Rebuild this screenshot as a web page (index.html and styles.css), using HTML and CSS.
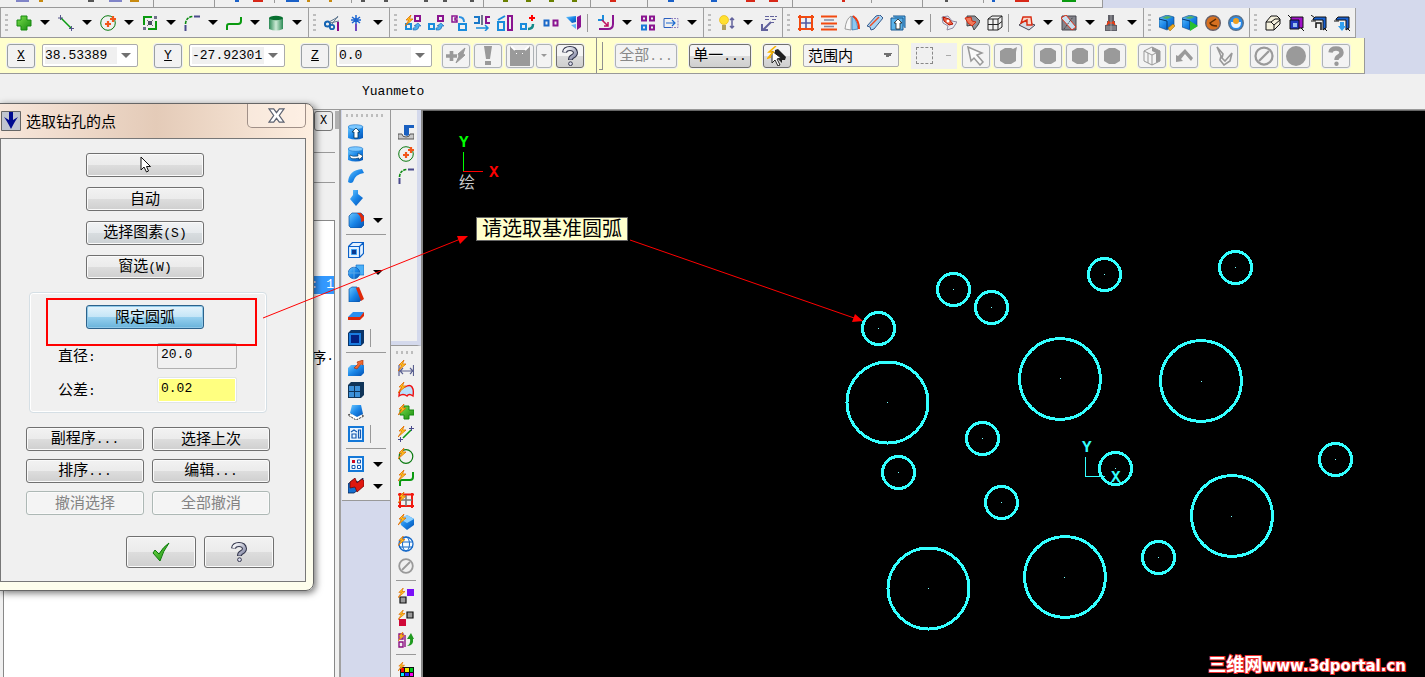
FILE: index.html
```html
<!DOCTYPE html>
<html lang="zh-CN">
<head>
<meta charset="utf-8">
<title>选取钻孔的点</title>
<link rel="stylesheet" href="styles.css">
</head>
<body>
<svg class="defs" aria-hidden="true">
  <defs>
    <linearGradient id="gBlue" x1="0" y1="0" x2="1" y2="1"><stop offset="0" stop-color="#6cc8ff"/><stop offset=".5" stop-color="#1a86e8"/><stop offset="1" stop-color="#0450b0"/></linearGradient>
    <linearGradient id="gGreen" x1="0" y1="0" x2="1" y2="1"><stop offset="0" stop-color="#7be04c"/><stop offset="1" stop-color="#178a10"/></linearGradient>
    <linearGradient id="gCyl" x1="0" x2="1"><stop offset="0" stop-color="#2c8a55"/><stop offset=".5" stop-color="#cdebd6"/><stop offset="1" stop-color="#2c8a55"/></linearGradient>
    <linearGradient id="gQ" x1="0" y1="0" x2="1" y2="1"><stop offset="0" stop-color="#fff"/><stop offset="1" stop-color="#7c80a0"/></linearGradient>
  </defs>
  <symbol id="bolt" viewBox="0 0 16 16"><path d="M6 0L1 5h3L0 11l8-7H4.500z" fill="#ffcf20" stroke="#e06a00" stroke-width=".8"/></symbol>
  <symbol id="plus" viewBox="0 0 16 16"><path d="M5 1h6v4h4v6h-4v4H5v-4H1V5h4z" fill="url(#gGreen)" stroke="#178a10"/></symbol>
  <symbol id="line" viewBox="0 0 16 16"><path d="M3 3l10 10" stroke="#0a9a10" stroke-width="1.500"/><path d="M0 3h5M2.500 0v5M11 13.500h5M13.500 11v5" stroke="#55558c"/></symbol>
  <symbol id="circ" viewBox="0 0 16 16"><circle cx="8" cy="8" r="7.300" fill="none" stroke="#0a7a10"/><path d="M5 9h6M8 6v6M10 4h6M13 1v6" stroke="#f2561a" stroke-width="2.200"/></symbol>
  <symbol id="rect" viewBox="0 0 16 16"><path d="M2 10V2h8M14 6v8H6" fill="none" stroke="#0a9a10" stroke-width="2"/><path d="M6 6h4v4H6z" fill="#444a70"/><path d="M12 1h3v3h-3zM1 12h3v3H1z" fill="#70708c"/><path d="M5 5l6 6M11 5l-6 6" stroke="#555" stroke-width=".8"/></symbol>
  <symbol id="fillet" viewBox="0 0 16 16"><path d="M1.500 10v6" stroke="#4a4a8c" stroke-width="2"/><path d="M1.500 9Q2 2 9 1.500" fill="none" stroke="#0a8a10" stroke-width="1.600" stroke-dasharray="3 1"/><path d="M10 1.500h6" stroke="#4a4a8c" stroke-width="2"/></symbol>
  <symbol id="spline" viewBox="0 0 16 16"><path d="M1 15v-4q0-2 2-2h9q3 0 3-3V2" fill="none" stroke="#0a9a10" stroke-width="2"/></symbol>
  <symbol id="cyl" viewBox="0 0 16 16"><path d="M1 3v11q7 3 14 0V3z" fill="url(#gCyl)"/><ellipse cx="8" cy="3" rx="7" ry="2.200" fill="#087030"/></symbol>
  <symbol id="trim" viewBox="0 0 16 16"><circle cx="3.500" cy="9" r="2.600" fill="none" stroke="#1464b4" stroke-width="2"/><circle cx="8" cy="12" r="2.200" fill="none" stroke="#1464b4" stroke-width="1.800"/><path d="M6 8l9-2M8 9l6-8M5 7l9-5" stroke="#607890"/><path d="M14 7v9" stroke="#8a0a8a" stroke-width="2"/></symbol>
  <symbol id="star" viewBox="0 0 16 16"><path d="M8 0v9M4 2l8 6M12 2L4 8M3 5h10" stroke="#1a64d0" stroke-width="1.500"/><path d="M8 9v7" stroke="#7048c0" stroke-width="2"/></symbol>
  <symbol id="xf1" viewBox="0 0 16 16"><path d="M1 9h5v5H1z" fill="none" stroke="#1a8cdc" stroke-width="2"/><path d="M10 1h5v5h-5z" fill="none" stroke="#8a1490" stroke-width="2"/><path d="M8 15h3q3-1 3-4h2l-3-3-4 3h2q0 2-3 2z" fill="#4ab0f0" stroke="#1060b0" stroke-width=".6"/></symbol>
  <symbol id="xf3" viewBox="0 0 16 16"><path d="M1 1h5v2H4v2h2v2H1z" fill="none" stroke="#8a1490" stroke-width="1.500"/><path d="M8 9h7v6H8z" fill="none" stroke="#1a8cdc" stroke-width="2"/><path d="M8 2q5 0 5 5" fill="none" stroke="#2a90e0" stroke-width="2"/></symbol>
  <symbol id="mirror" viewBox="0 0 16 16"><path d="M0 2h5v6H0" fill="none" stroke="#1a78c8" stroke-width="2"/><path d="M16 2h-4v6h4" fill="none" stroke="#8a1490" stroke-width="2"/><path d="M8 0v10" stroke="#70708c" stroke-width="2"/><path d="M2 13h12M11 10l3 3-3 3" fill="none" stroke="#1a8cdc" stroke-width="1.500"/></symbol>
  <symbol id="scale" viewBox="0 0 16 16"><path d="M1 7h6v8H1z" fill="none" stroke="#1a8cdc" stroke-width="2"/><path d="M11 1h4v14h-4z" fill="none" stroke="#8a1490" stroke-width="2"/><path d="M1 5l7-4" stroke="#1a8cdc" stroke-width="2"/></symbol>
  <symbol id="offs" viewBox="0 0 16 16"><path d="M1 9h5v5H1z" fill="none" stroke="#1a8cdc" stroke-width="2"/><path d="M12 0v6M9 3h6" stroke="#f00" stroke-width="2"/><path d="M8 14q5 0 5-5" stroke="#148a8a" fill="none" stroke-width="2.500"/></symbol>
  <symbol id="two" viewBox="0 0 16 16"><path d="M1.500 5.500h4v5h-4z" fill="none" stroke="#1a68c8" stroke-width="2"/><path d="M10.500 5.500h4v5h-4z" fill="none" stroke="#8a1490" stroke-width="2"/></symbol>
  <symbol id="proj" viewBox="0 0 16 16"><path d="M0 2l10-1v6l-4 1z" fill="url(#gBlue)"/><path d="M11 2l4-2v12l-4 3z" fill="#8a1490"/><path d="M5 10l5 4V9z" fill="#60b8f8"/></symbol>
  <symbol id="arrL" viewBox="0 0 16 16"><path d="M0 5h5V0" fill="none" stroke="#1a8cdc" stroke-width="2"/><path d="M15 0v9q0 5-5 5H1" fill="none" stroke="#8a1490" stroke-width="2"/><path d="M4 5l6 6M10 7v4H6" fill="none" stroke="#c01060" stroke-width="1.500"/></symbol>
  <symbol id="four" viewBox="0 0 16 16"><path d="M2 1.500h4v4H2zM10 1.500h4v4h-4zM10 10.500h4v4h-4z" fill="none" stroke="#8a1490" stroke-width="2"/><path d="M2 10.500h4v4H2z" fill="none" stroke="#1a78d8" stroke-width="2"/></symbol>
  <symbol id="stretch" viewBox="0 0 16 16"><path d="M8 3.500H1v9h7" fill="none" stroke="#2a60c0"/><path d="M8 3.500h7v9H8" fill="none" stroke="#9080c0" stroke-dasharray="2 1"/><path d="M3 8h9M9 5l3 3-3 3" fill="none" stroke="#1a68d0" stroke-width="1.200"/></symbol>
  <symbol id="bulb" viewBox="0 0 16 16"><circle cx="5" cy="5" r="4.500" fill="#ffe030" stroke="#e8b000" stroke-width=".6"/><path d="M3 10h4v5H3z" fill="#b0a060"/><path d="M13 3v10M11 5l2-2 2 2M11 11l2 2 2-2" fill="none" stroke="#62629c" stroke-width="1.500"/></symbol>
  <symbol id="note" viewBox="0 0 16 16"><path d="M4 1.500h12M4 4.500h5m2 0h5M9 7.500h5" stroke="#62629c" stroke-width="1.200" stroke-dasharray="4 1"/><path d="M10 7l-8 8M1 9v6h6" fill="none" stroke="#62629c" stroke-width="2"/></symbol>
  <symbol id="gridr" viewBox="0 0 16 16"><path d="M2 0v16M14 0v16M0 2h16M0 14h16" stroke="#f24a10" stroke-width="2"/><path d="M8 3v10M3 8h10" stroke="#5058a0" stroke-width="1.600"/></symbol>
  <symbol id="bars" viewBox="0 0 16 16"><path d="M0 1.500h16M0 8.500h16M0 14.500h16" stroke="#f24a10" stroke-width="2"/><path d="M3 5h10M3 11.500h10" stroke="#8088a0" stroke-width="1.500"/></symbol>
  <symbol id="revolve" viewBox="0 0 16 16"><path d="M7 1Q2 4 1 14l6 1z" fill="#f8f8f8" stroke="#888" stroke-width=".8"/><path d="M8 1q4 1 6 13l-6 1z" fill="#8cc8f0" stroke="#1a5a9a" stroke-width=".6"/><path d="M9 1q6 4 6 13" stroke="#f03a10" stroke-width="2" fill="none"/></symbol>
  <symbol id="sweep" viewBox="0 0 16 16"><path d="M0 11L9 1l4-1 3 3-9 11-3 1-1-3z" fill="#a8d4f4" stroke="#36588a"/><path d="M3 11l9-9" stroke="#f04a20" stroke-width="1.500"/></symbol>
  <symbol id="net" viewBox="0 0 16 16"><path d="M1 3h12v12H1zM3 1h12v12" fill="#5cb4ec" stroke="#1a5890"/><path d="M8 4l4 4h-2v6H6V8H4z" fill="#fff" stroke="#222" stroke-width=".8"/></symbol>
  <symbol id="srf1" viewBox="0 0 16 16"><path d="M1 2l6-1 4 5 5 1-4 6-6 2 1-4-5-3z" fill="#e8ecf4" stroke="#9088a0"/><path d="M2 2l6 2 4 5-4 1-5-4z" fill="#f06040" stroke="#b01000"/><circle cx="7" cy="6" r="1.500" fill="#fff"/></symbol>
  <symbol id="srf2" viewBox="0 0 16 16"><path d="M3 1h8l5 5-2 4-4 5-2-5-5 1z" fill="#90949c" stroke="#444"/><path d="M1 3l6-1 1 4 4 1-4 4-4-3z" fill="#f07858" stroke="#d02810"/></symbol>
  <symbol id="cubew" viewBox="0 0 16 16"><path d="M1 4h10v11H1zM1 4l4-3h10v11l-4 3M11 4l4-3M1 9.500h10l4-3M6 4v11" fill="none" stroke="#222"/></symbol>
  <symbol id="srf3" viewBox="0 0 16 16"><path d="M0 10l5-4 11 4-6 5z" fill="#d8dce4" stroke="#445"/><path d="M4 2h8l1 8H8V5L2 8z" fill="#f8d8cc" stroke="#d82a10" stroke-width="1.400"/></symbol>
  <symbol id="srf4" viewBox="0 0 16 16"><path d="M1 1h14v14H1z" fill="#84848c" stroke="#44444c"/><path d="M0 3l5-3 10 12-4 3z" fill="#c8e0f0" stroke="#e03018"/><path d="M3 14l9-12" stroke="#444" stroke-dasharray="2 1"/></symbol>
  <symbol id="tower" viewBox="0 0 16 16"><path d="M5 0h6v6h1v4h2v6H2v-6h2V6h1z" fill="#606068"/><path d="M6 6L4 10M10 6l2 4M5 8h6" stroke="#f03a10" stroke-width="1.400"/><path d="M3 12h10M3 14h10M8 0v16" stroke="#ccc" stroke-width=".6"/></symbol>
  <symbol id="mach1" viewBox="0 0 16 16"><path d="M0 3l8-3 7 2v9l-7 4-8-3z" fill="url(#gBlue)" stroke="#104880" stroke-width=".6"/><path d="M3 3l5-2 5 1-5 2z" fill="#54b060"/><path d="M0 4l8 2v8" stroke="#043870" fill="none"/><path d="M9 13l5-4 2 2-5 5z" fill="#f0a820" stroke="#906000" stroke-width=".5"/></symbol>
  <symbol id="mach2" viewBox="0 0 16 16"><path d="M0 3l8-3 7 2v9l-7 4-8-3z" fill="url(#gBlue)" stroke="#104880" stroke-width=".6"/><path d="M3 3l5-2 5 1-5 2z" fill="#54b060"/><path d="M0 4l8 2v8" stroke="#043870" fill="none"/><path d="M8 6l8 5-8 5z" fill="#28c030"/></symbol>
  <symbol id="orb1" viewBox="0 0 16 16"><circle cx="8" cy="8" r="7.300" fill="#d87020" stroke="#66606a" stroke-width="1.400"/><path d="M11 4L5 8q1 3 7 3" fill="none" stroke="#5a2a00" stroke-width="1.500"/></symbol>
  <symbol id="orb2" viewBox="0 0 16 16"><circle cx="8" cy="8" r="7.300" fill="#2a8ae8" stroke="#56708c" stroke-width="1.400"/><path d="M3 7q0 6 5 6t5-6z" fill="#e8f4ff"/><circle cx="8" cy="6" r="3" fill="#f0a020"/></symbol>
  <symbol id="box1" viewBox="0 0 16 16"><path d="M1 7l5-6h6l3 3v5l-6 6H1z" fill="#f4f0dc" stroke="#111"/><path d="M1 7h5l4-3h5M6 7l3 3v5M9 10l6-5" fill="none" stroke="#111"/></symbol>
  <symbol id="box2" viewBox="0 0 16 16"><path d="M3 2h12v11H3z" fill="#a010c8" stroke="#111"/><path d="M2 5h9v9H2z" fill="#2038c0" stroke="#111"/><path d="M5 8h4v4H5z" fill="#9ac0f0"/><path d="M0 0l3 3M13 13l3 3" stroke="#111"/></symbol>
  <symbol id="box3" viewBox="0 0 16 16"><path d="M2 4l2-2h11v11l-3 2V5H2z" fill="#1860d0" stroke="#111"/><path d="M5 13V8h5v7" fill="none" stroke="#111" stroke-width="1.500"/><path d="M0 6h5M0 0l4 3M13 13l3 3" stroke="#111"/></symbol>
  <symbol id="box4" viewBox="0 0 16 16"><path d="M2 4l2-2h11v11l-3 2V5H2z" fill="#1860d0" stroke="#111"/><path d="M6 7h4v4h2l-4 5-4-5h2z" fill="#30a0f0"/><path d="M0 6h5M13 13l3 3" stroke="#111"/></symbol>
  <symbol id="s1" viewBox="0 0 16 16"><path d="M0 3v11q8 3 15 0V3z" fill="url(#gBlue)"/><ellipse cx="7.500" cy="3" rx="7.500" ry="2.300" fill="#7cc8ff" stroke="#1470c8" stroke-width=".6"/><path d="M8 4l4 4h-2v6H6V8H4z" fill="#fff" stroke="#035" stroke-width=".8"/></symbol>
  <symbol id="s2" viewBox="0 0 16 16"><path d="M0 3v11q8 3 15 0V3z" fill="url(#gBlue)"/><ellipse cx="7.500" cy="3" rx="7.500" ry="2.300" fill="#7cc8ff" stroke="#1470c8" stroke-width=".6"/><path d="M2 9q2 2 8 1V7l5 3-4 4v-2q-8 2-9-1z" fill="#fff" stroke="#035" stroke-width=".6"/></symbol>
  <symbol id="s3" viewBox="0 0 16 16"><path d="M0 14Q1 2 14 1l2 4Q7 6 5 14q-2 2-5 0z" fill="url(#gBlue)"/></symbol>
  <symbol id="s4" viewBox="0 0 16 16"><path d="M5 0h5v4l5 4-7 8-6-7 3-4z" fill="url(#gBlue)"/></symbol>
  <symbol id="s5" viewBox="0 0 16 16"><path d="M1 4l3-3h9l3 3v9l-3 3H3l-2-2z" fill="url(#gBlue)" stroke="#0a50a0" stroke-width=".7"/><path d="M9 1h4l3 4v4l-3 1q1-5-4-9z" fill="#e02808"/></symbol>
  <symbol id="s6" viewBox="0 0 16 16"><path d="M.500 4.500h11v11H.500zM.500 4.500l4-4h11v11l-4 4M11.500 4.500l4-4" fill="#e4f2ff" stroke="#0a60c8" stroke-width="1.200"/><path d="M3.500 7.500h5v5h-5z" fill="#0a3a90" stroke="#3aa0f0"/></symbol>
  <symbol id="s7" viewBox="0 0 16 16"><path d="M8 1h8v10H8z" fill="#4ab0f8" stroke="#1470c8" stroke-width=".7"/><circle cx="6" cy="9" r="5.800" fill="url(#gBlue)" stroke="#0a58b0" stroke-width=".7"/><path d="M6 3v12M0 9h12" stroke="#5aa8e8"/></symbol>
  <symbol id="s8" viewBox="0 0 16 16"><path d="M1 3l3-2h5l5 12-3 3H1z" fill="url(#gBlue)" stroke="#0a50a0" stroke-width=".7"/><path d="M8 2l3-1 5 12-3 2z" fill="#e02808"/></symbol>
  <symbol id="s9" viewBox="0 0 16 16"><path d="M0 9l5-5h11l-3 5z" fill="#2a90f0"/><path d="M0 9h12l4-5v4l-4 4H0z" fill="#e02808"/></symbol>
  <symbol id="s10" viewBox="0 0 16 16"><path d="M0 3l3-3h13v13l-3 3H0z" fill="#0a3468"/><path d="M1 3h12v12H1z" fill="#1a7ce0"/><path d="M3 5h8v8H3z" fill="#042080"/></symbol>
  <symbol id="s11" viewBox="0 0 16 16"><path d="M0 8l3-3h13v8l-3 3H0z" fill="url(#gBlue)"/><path d="M6 8l4-4-1-2 6-2v5l-2-1-4 5z" fill="#f06830" stroke="#a02800" stroke-width=".6"/></symbol>
  <symbol id="s12" viewBox="0 0 16 16"><path d="M0 3l3-3h13v13l-3 3H0z" fill="#103458"/><path d="M1 4h5v5H1zM7 4h5v5H7zM1 10h5v5H1zM7 10h5v5H7z" fill="#3c90d8"/></symbol>
  <symbol id="s13" viewBox="0 0 16 16"><path d="M0 11l8-3 8 4-8 4z" fill="#fff" stroke="#333" stroke-dasharray="2 1"/><path d="M4 1h9l2 9-6 3-7-4z" fill="url(#gBlue)"/></symbol>
  <symbol id="s14" viewBox="0 0 16 16"><path d="M1 1h14v14H1z" fill="#eaf5ff" stroke="#1478d8" stroke-width="2"/><path d="M4 8h4v4H4zM10.500 4h2v8h-2zM3 6l3-2 3 2" fill="none" stroke="#1458b0" stroke-width="1.200"/></symbol>
  <symbol id="s15" viewBox="0 0 16 16"><path d="M1 1h14v14H1z" fill="#eaf5ff" stroke="#1478d8" stroke-width="2"/><path d="M9.500 4h3v3h-3zM4 9.500h3v3H4zM9.500 9.500h3v3h-3z" fill="#fff" stroke="#1458b0"/><path d="M4 4h3v3H4z" fill="#d00820"/></symbol>
  <symbol id="s16" viewBox="0 0 16 16"><path d="M0 6l5-4 5 2 5-4v8l-9 7H0z" fill="#1470d0" stroke="#06204c" stroke-width=".8"/><path d="M2 4l5-4 2 5 5-4 2 2v5l-7 6-2-5-5 1z" fill="#e01810" stroke="#600" stroke-width=".7"/></symbol>
  <symbol id="t1" viewBox="0 0 16 16"><path d="M0 10h4q0 3 4 3t4-3h4v5H0z" fill="#c8c8c8" stroke="#555"/><path d="M6 1h10v3h-5v7l-2 1-3-1z" fill="#1a60c0"/></symbol>
  <symbol id="a1" viewBox="0 0 16 16"><path d="M1 5v11M15.500 5v11M3 11h11M5 8l-3 3 3 3M12 8l3 3-3 3" fill="none" stroke="#5a6090" stroke-width="1.200"/><use href="#bolt" width="16" height="16"/></symbol>
  <symbol id="a2" viewBox="0 0 16 16"><path d="M1 14q0-8 6-9 5-3 7 0 2 3 1 9-4-3-6 0-4-3-8 0z" fill="#b8e0fc" stroke="#f01010" stroke-width="1.400"/><use href="#bolt" width="16" height="16"/></symbol>
  <symbol id="a3" viewBox="0 0 16 16"><path d="M6 2h5v4h5v5h-5v4H6v-4H2V6h4z" fill="url(#gGreen)" stroke="#178a10"/><use href="#bolt" width="16" height="16"/></symbol>
  <symbol id="a4" viewBox="0 0 16 16"><path d="M5 12l8-8" stroke="#0a9a10" stroke-width="1.600"/><path d="M11 2.500h5M13.500 0v5M0 13.500h5M2.500 11v5" stroke="#4a4a8c"/><use href="#bolt" width="16" height="16"/></symbol>
  <symbol id="a5" viewBox="0 0 16 16"><circle cx="8" cy="8.500" r="6.800" fill="none" stroke="#0a7a10" stroke-width="1.200"/><use href="#bolt" width="16" height="16"/></symbol>
  <symbol id="a6" viewBox="0 0 16 16"><path d="M2 16v-4q0-2 2-2h8q3 0 3-3V2" fill="none" stroke="#0a9a10" stroke-width="2"/><use href="#bolt" width="16" height="16"/></symbol>
  <symbol id="a7" viewBox="0 0 16 16"><path d="M2 1v15M14 1v15M0 2.500h16M0 14h16" stroke="#f21a10" stroke-width="2"/><path d="M8 3v11M3 8h11" stroke="#777" stroke-width="1.600"/><use href="#bolt" width="16" height="16"/></symbol>
  <symbol id="a8" viewBox="0 0 16 16"><path d="M2 5l7-4 7 4v6l-7 5-6-5z" fill="url(#gBlue)"/><path d="M2 5l7 4 7-4-7-4z" fill="#8cd0ff"/><use href="#bolt" width="16" height="16"/></symbol>
  <symbol id="a9" viewBox="0 0 16 16"><circle cx="8" cy="8" r="7" fill="#f4faff" stroke="#1468c8" stroke-width="1.300"/><ellipse cx="8" cy="8" rx="3.500" ry="7" fill="none" stroke="#1468c8"/><path d="M1 6h14M1 11h14" stroke="#1468c8"/><use href="#bolt" width="14" height="14"/></symbol>
  <symbol id="ban" viewBox="0 0 16 16"><circle cx="8" cy="8" r="6.800" fill="none" stroke="#9a9a9a" stroke-width="1.800"/><path d="M4 12l8-8" stroke="#9a9a9a" stroke-width="1.800"/></symbol>
  <symbol id="b1" viewBox="0 0 16 16"><path d="M9 1h7v7H9z" fill="#7a10f8"/><path d="M2 9h6v6H2z" fill="#999" stroke="#111" stroke-width="1.200"/><use href="#bolt" width="14" height="14"/></symbol>
  <symbol id="b2" viewBox="0 0 16 16"><path d="M9 2h6v6H9z" fill="#999" stroke="#111" stroke-width="1.200"/><path d="M1 9h7v7H1z" fill="#d00838"/><use href="#bolt" width="14" height="14"/></symbol>
  <symbol id="b3" viewBox="0 0 16 16"><path d="M1 2h4v5H1zM1 10h4v5H1zM7 3v12" fill="none" stroke="#8a1080" stroke-width="1.400"/><path d="M9 14q4-2 3-7H9l4-6 3 6h-1q1 7-6 7z" fill="#209a20"/><use href="#bolt" width="13" height="13"/></symbol>
  <symbol id="b4" viewBox="0 0 16 16"><path d="M2 5h14v10H2z" fill="#111"/><path d="M3 6h3v4H3z" fill="#f00"/><path d="M7 6h4v4H7z" fill="#ee0"/><path d="M12 6h3v4h-3z" fill="#0c2"/><path d="M3 11h3v3H3z" fill="#0ef"/><path d="M7 11h4v3H7z" fill="#22f"/><path d="M12 11h3v3h-3z" fill="#f0e"/><use href="#bolt" width="13" height="13"/></symbol>
  <symbol id="q" viewBox="0 0 20 20"><path d="M4.500 6.500Q5 2.500 10 2.500t5.500 4q0 2.500-3 4-2 1-2 3.500" fill="none" stroke="#33364c" stroke-width="5"/><path d="M4.500 6Q5.500 2.500 10 2.500t5.500 4q0 2.500-3 4-2 1-2 3" fill="none" stroke="url(#gQ)" stroke-width="3"/><circle cx="10.500" cy="17.700" r="1.900" fill="#dde" stroke="#33364c"/></symbol>
  <symbol id="qg" viewBox="0 0 20 20"><path d="M4.500 6.500Q5 2.500 10 2.500t5.500 4q0 2.500-3 4-2 1-2 3.500" fill="none" stroke="#999" stroke-width="4.400"/><circle cx="10.500" cy="17.700" r="2.200" fill="#999"/></symbol>
  <symbol id="g1" viewBox="0 0 20 20"><path d="M0 10h11M5.500 5v10" stroke="#9a9a9a" stroke-width="3.600"/><path d="M19 2l-7 6 1 2-3 7 9-8-2-1z" fill="#9a9a9a" stroke="#9a9a9a"/></symbol>
  <symbol id="g2" viewBox="0 0 20 20"><path d="M6 0h8l-2 13H8z" fill="#9a9a9a"/><path d="M7 15h6v4H7z" fill="#9a9a9a"/></symbol>
  <symbol id="g3" viewBox="0 0 20 20"><path d="M0 0l5 4h10l5-4v20H0z" fill="#9a9a9a"/><path d="M1 0l4 4M19 0l-4 4" stroke="#fff" stroke-width="2"/><path d="M6 7h1v1H6zM12 7h1v1h-1z" fill="#fff"/></symbol>
  <symbol id="ptr" viewBox="0 0 20 20"><path d="M8 4l3-1 8 8-1 3h-3v3l-7-7z" fill="#222"/><path d="M5 5v12l3-3 3 6 2-1-3-6 4-1z" fill="#fff" stroke="#222"/><path d="M9 0L2 6h4l-5 6 3-1" fill="none" stroke="#f8b400" stroke-width="1.600"/></symbol>
  <symbol id="garr" viewBox="0 0 20 20"><path d="M2 1l3 14 3-3 6 7 3-3-6-7 5-2z" fill="#fafafa" stroke="#999" stroke-width="1.500"/></symbol>
  <symbol id="hex" viewBox="0 0 20 20"><path d="M2 5l5-3h6l5 3v10l-5 3H7l-5-3z" fill="#9a9a9a"/></symbol>
  <symbol id="hexs" viewBox="0 0 20 20"><path d="M2 5l5-3h6l2 1 4-2-1 5v9l-5 3H7l-5-3z" fill="#9a9a9a"/></symbol>
  <symbol id="cubeg" viewBox="0 0 20 20"><path d="M2 5l8-4 8 4v10l-8 4-8-4zM2 5l8 4 8-4M10 9v10M6 7v10" fill="#f4f4f4" stroke="#999"/><path d="M10 1l8 4v10l-4 2V7l-4-2z" fill="#999"/></symbol>
  <symbol id="chev" viewBox="0 0 20 20"><path d="M2 16V9l2 1 7-7 8 9-2 3-6-7-4 5 2 2z" fill="#9a9a9a"/></symbol>
  <symbol id="vchk" viewBox="0 0 20 20"><path d="M3 1l6 7-1 4 3 3 7-8-2 8-6 4-4-5 1-4z" fill="#f4f4f4" stroke="#999" stroke-width="1.600"/></symbol>
  <symbol id="disc" viewBox="0 0 20 20"><circle cx="10" cy="10" r="10" fill="#9a9a9a"/></symbol>
  <symbol id="check" viewBox="0 0 20 20"><path d="M2 11l2-3 4 4Q12 5 18 1q-6 8-9 18z" fill="url(#gGreen)" stroke="#0a7a08" stroke-width="1"/></symbol>
  <symbol id="cur" viewBox="0 0 12 18"><path d="M2 1v13l3-3 2.500 5 2-1L7.500 10.500h4z" fill="#fff" stroke="#111"/></symbol>
</svg>

<header class="bars">
  <div class="sliver">
    <svg aria-hidden="true">
      <path d="M16 1h13M109 1h13" stroke="#8084c8" stroke-width="2"/><path d="M39 1h4M130 1h9M307 1h3M329 1h3" stroke="#c88a10" stroke-width="2"/>
      <path d="M88 1h6M361 1h4M384 1h4M424 1h4M443 1h4M470 1h4M945 1h3" stroke="#555" stroke-width="2"/>
      <path d="M235 1h4M286 1h13M668 1h6M711 1h6M992 1h3" stroke="#1a60c8" stroke-width="2"/><path d="M253 1h10M610 1h6M746 1h9M769 1h9M842 1h3M1015 1h14" stroke="#d82818" stroke-width="2"/>
      <path d="M503 1h5M526 1h5M549 1h5M572 1h5" stroke="#6a8000" stroke-width="2"/><path d="M1062 1h14" stroke="#0a9a10" stroke-width="2"/>
      <path d="M153.500 0v7M214.500 0v7M483.500 0v7M590.500 0v7M647.500 0v7M792.500 0v7M922.500 0v7M274.500 0v3M351.500 0v3M871.500 0v3M983.500 0v3" stroke="#999"/>
    </svg>
  </div>

  <div class="iconbar">
    <div class="grp first"><i class="grip"></i>
      <button class="tb" aria-label="绘点"><svg><use href="#plus"/></svg></button><button class="dd" aria-label="更多"></button>
      <button class="tb" aria-label="直线"><svg><use href="#line"/></svg></button><button class="dd" aria-label="更多"></button>
      <button class="tb" aria-label="圆"><svg><use href="#circ"/></svg></button><button class="dd" aria-label="更多"></button>
      <button class="tb" aria-label="矩形"><svg><use href="#rect"/></svg></button><button class="dd" aria-label="更多"></button>
      <button class="tb" aria-label="倒圆角"><svg><use href="#fillet"/></svg></button><button class="dd" aria-label="更多"></button>
      <button class="tb" aria-label="曲线"><svg><use href="#spline"/></svg></button><button class="dd" aria-label="更多"></button>
      <button class="tb" aria-label="圆柱"><svg><use href="#cyl"/></svg></button><button class="dd" aria-label="更多"></button>
    </div>
    <div class="grp roomy"><i class="grip"></i>
      <button class="tb" aria-label="修剪"><svg><use href="#trim"/></svg></button><button class="tb" aria-label="打断"><svg><use href="#star"/></svg></button><button class="dd" aria-label="更多"></button>
    </div>
    <div class="grp"><i class="grip"></i>
      <button class="tb" aria-label="动态平移"><svg><use href="#xf1"/><use href="#bolt"/></svg></button>
      <button class="tb" aria-label="平移"><svg><use href="#xf1"/></svg></button>
      <button class="tb" aria-label="旋转"><svg><use href="#xf3"/></svg></button>
      <button class="tb" aria-label="镜像"><svg><use href="#mirror"/></svg></button>
      <button class="tb" aria-label="缩放"><svg><use href="#scale"/></svg></button>
      <button class="tb" aria-label="移动到原点"><svg><use href="#offs"/></svg></button>
      <button class="tb" aria-label="补正"><svg><use href="#two"/></svg></button>
      <button class="tb" aria-label="投影"><svg><use href="#proj"/></svg></button><i class="vs"></i>
      <button class="tb" aria-label="单体补正"><svg><use href="#arrL"/></svg></button><button class="dd" aria-label="更多"></button>
      <button class="tb" aria-label="阵列"><svg><use href="#four"/></svg></button>
      <button class="tb" aria-label="拖曳"><svg><use href="#stretch"/></svg></button><button class="dd" aria-label="更多"></button>
    </div>
    <div class="grp"><i class="grip"></i>
      <button class="tb" aria-label="智能标注"><svg><use href="#bulb"/></svg></button><button class="dd" aria-label="更多"></button>
      <button class="tb" aria-label="注解"><svg><use href="#note"/></svg></button>
    </div>
    <div class="grp"><i class="grip"></i>
      <button class="tb" aria-label="网状曲面"><svg><use href="#gridr"/></svg></button>
      <button class="tb" aria-label="直纹曲面"><svg><use href="#bars"/></svg></button>
      <button class="tb" aria-label="旋转曲面"><svg><use href="#revolve"/></svg></button>
      <button class="tb" aria-label="扫描曲面"><svg><use href="#sweep"/></svg></button>
      <button class="tb" aria-label="拉伸曲面"><svg><use href="#net"/></svg></button><button class="dd" aria-label="更多"></button><i class="vs"></i>
      <button class="tb" aria-label="曲面补正"><svg><use href="#srf1"/></svg></button>
      <button class="tb" aria-label="曲面延伸"><svg><use href="#srf2"/></svg></button>
      <button class="tb" aria-label="线框"><svg><use href="#cubew"/></svg></button><i class="vs"></i>
      <button class="tb" aria-label="曲面圆角"><svg><use href="#srf3"/></svg></button><button class="dd" aria-label="更多"></button>
      <button class="tb" aria-label="曲面修剪"><svg><use href="#srf4"/></svg></button><button class="dd" aria-label="更多"></button>
      <button class="tb" aria-label="曲面熔接"><svg><use href="#tower"/></svg></button><button class="dd" aria-label="更多"></button>
    </div>
    <div class="grp"><i class="grip"></i>
      <button class="tb" aria-label="机床设置"><svg><use href="#mach1"/></svg></button>
      <button class="tb" aria-label="机床模拟"><svg><use href="#mach2"/></svg></button>
      <button class="tb" aria-label="刀路"><svg><use href="#orb1"/></svg></button>
      <button class="tb" aria-label="验证"><svg><use href="#orb2"/></svg></button>
    </div>
    <div class="grp"><i class="grip"></i>
      <button class="tb" aria-label="等角视图"><svg><use href="#box1"/></svg></button>
      <button class="tb" aria-label="俯视图"><svg><use href="#box2"/></svg></button>
      <button class="tb" aria-label="前视图"><svg><use href="#box3"/></svg></button>
      <button class="tb" aria-label="右视图"><svg><use href="#box4"/></svg></button>
    </div>
  </div>

  <div class="coordbar">
    <div class="fld"><button class="sq lat"><u>X</u></button><span class="combo"><input type="text" value="38.53389" aria-label="X"><button class="arrow" aria-label="X 列表"></button></span></div>
    <div class="fld"><button class="sq lat"><u>Y</u></button><span class="combo"><input type="text" value="-27.92301" aria-label="Y"><button class="arrow" aria-label="Y 列表"></button></span></div>
    <div class="fld last"><button class="sq lat"><u>Z</u></button><span class="combo"><input type="text" value="0.0" aria-label="Z"><button class="arrow" aria-label="Z 列表"></button></span></div>
    <div class="set">
      <button class="sq" disabled aria-label="快速绘点"><svg><use href="#g1"/></svg></button>
      <button class="sq" disabled aria-label="提示"><svg><use href="#g2"/></svg></button>
      <div class="split"><button class="sq" disabled aria-label="捕捉"><svg><use href="#g3"/></svg></button><button class="sq slim" disabled aria-label="捕捉列表"></button></div>
      <button class="sq hot" aria-label="帮助"><svg><use href="#q"/></svg></button>
    </div>
    <i class="rail"></i><i class="hook"></i>
    <div class="picks">
      <button class="txt" disabled>全部<span class="lat">...</span></button>
      <button class="txt hot">单一<span class="lat">...</span></button>
      <button class="sq hot" aria-label="选择"><svg><use href="#ptr"/></svg></button>
      <select aria-label="范围"><option>范围内</option></select>
      <button class="marq" disabled aria-label="窗选"></button>
    </div>
    <div class="set"><button class="sq" disabled aria-label="标准选择"><svg><use href="#garr"/></svg></button><button class="sq" disabled aria-label="实体选择"><svg><use href="#hexs"/></svg></button></div>
    <div class="set"><button class="sq" disabled aria-label="边界"><svg><use href="#hex"/></svg></button><button class="sq" disabled aria-label="实体面"><svg><use href="#hex"/></svg></button><button class="sq" disabled aria-label="实体"><svg><use href="#hex"/></svg></button></div>
    <div class="set"><button class="sq" disabled aria-label="背面"><svg><use href="#cubeg"/></svg></button><button class="sq" disabled aria-label="上次"><svg><use href="#chev"/></svg></button></div>
    <div class="set"><button class="sq" disabled aria-label="校验"><svg><use href="#vchk"/></svg></button></div>
    <div class="set"><button class="sq" disabled aria-label="取消"><svg><use href="#ban"/></svg></button><button class="sq" disabled aria-label="结束"><svg><use href="#disc"/></svg></button></div>
    <div class="set"><button class="sq" disabled aria-label="选择帮助"><svg><use href="#qg"/></svg></button></div>
  </div>
  <div class="ribbon lat">Yuanmeto</div>
</header>

<main class="work">
  <section class="manager">
    <div class="mtop"><button class="mclose lat" aria-label="关闭">X</button><i></i></div>
    <div class="mtab"></div>
    <div class="mtool"></div>
    <div class="tree"><div class="sel lat">: 1</div><div class="node">程序<span class="lat">·</span></div></div>
  </section>

  <aside class="solids">
    <div class="vbar">
      <i class="hgrip"></i>
      <div class="r"><button class="tb" aria-label="挤出"><svg><use href="#s1"/></svg></button></div>
      <div class="r"><button class="tb" aria-label="旋转实体"><svg><use href="#s2"/></svg></button></div>
      <div class="r"><button class="tb" aria-label="扫描"><svg><use href="#s3"/></svg></button></div>
      <div class="r"><button class="tb" aria-label="举升"><svg><use href="#s4"/></svg></button></div>
      <div class="r"><button class="tb" aria-label="实体圆角"><svg><use href="#s5"/></svg></button><button class="dd" aria-label="更多"></button></div>
      <hr>
      <div class="r"><button class="tb" aria-label="抽壳"><svg><use href="#s6"/></svg></button></div>
      <div class="r"><button class="tb" aria-label="布尔运算"><svg><use href="#s7"/></svg></button><button class="dd" aria-label="更多"></button></div>
      <div class="r"><button class="tb" aria-label="牵引"><svg><use href="#s8"/></svg></button></div>
      <div class="r"><button class="tb" aria-label="薄片"><svg><use href="#s9"/></svg></button></div>
      <div class="r"><button class="tb" aria-label="实体修剪"><svg><use href="#s10"/></svg></button><i class="tick"></i></div>
      <hr>
      <div class="r"><button class="tb" aria-label="移动面"><svg><use href="#s11"/></svg></button></div>
      <div class="r"><button class="tb" aria-label="由曲面生成"><svg><use href="#s12"/></svg></button></div>
      <div class="r"><button class="tb" aria-label="展开"><svg><use href="#s13"/></svg></button></div>
      <div class="r"><button class="tb" aria-label="工程图"><svg><use href="#s14"/></svg></button><i class="tick"></i></div>
      <hr>
      <div class="r"><button class="tb" aria-label="特征"><svg><use href="#s15"/></svg></button><button class="dd" aria-label="更多"></button></div>
      <div class="r"><button class="tb" aria-label="查找特征"><svg><use href="#s16"/></svg></button><button class="dd" aria-label="更多"></button></div>
    </div>
  </aside>

  <aside class="quick">
    <div class="qtop">
      <div class="r"><button class="tb" aria-label="钻孔"><svg><use href="#t1"/></svg></button></div>
      <div class="r"><button class="tb" aria-label="圆"><svg><use href="#circ"/></svg></button></div>
      <div class="r"><button class="tb" aria-label="圆角"><svg><use href="#fillet"/></svg></button></div>
    </div>
    <div class="qlist">
      <i class="hgrip"></i>
      <div class="r"><button class="tb" aria-label="选标注"><svg><use href="#a1"/></svg></button></div>
      <div class="r"><button class="tb" aria-label="选曲面"><svg><use href="#a2"/></svg></button></div>
      <div class="r"><button class="tb" aria-label="选点"><svg><use href="#a3"/></svg></button></div>
      <div class="r"><button class="tb" aria-label="选线"><svg><use href="#a4"/></svg></button></div>
      <div class="r"><button class="tb" aria-label="选圆"><svg><use href="#a5"/></svg></button></div>
      <div class="r"><button class="tb" aria-label="选曲线"><svg><use href="#a6"/></svg></button></div>
      <div class="r"><button class="tb" aria-label="选网格"><svg><use href="#a7"/></svg></button></div>
      <div class="r"><button class="tb" aria-label="选实体"><svg><use href="#a8"/></svg></button></div>
      <div class="r"><button class="tb" aria-label="选线框"><svg><use href="#a9"/></svg></button></div>
      <div class="r"><button class="tb" aria-label="清除"><svg><use href="#ban"/></svg></button></div>
      <hr>
      <div class="r"><button class="tb" aria-label="选结果"><svg><use href="#b1"/></svg></button></div>
      <div class="r"><button class="tb" aria-label="选群组"><svg><use href="#b2"/></svg></button></div>
      <div class="r"><button class="tb" aria-label="选命名群组"><svg><use href="#b3"/></svg></button></div>
      <hr>
      <div class="r"><button class="tb" aria-label="选颜色"><svg><use href="#b4"/></svg></button></div>
    </div>
  </aside>

  <section class="view">
    <svg class="drawing" role="img" aria-label="绘图区">
      <g transform="translate(-423 -111)">
        <g class="axes">
          <path d="M463.500 152v20" stroke="#0f0"/><path d="M463 171.500h20" stroke="#f00"/>
          <text x="459" y="147" fill="#0f0">Y</text><text x="489" y="177" fill="#f00">X</text>
          <text class="mark" x="459" y="188" fill="#c8c8c8">绘</text>
        </g>
        <g class="holes">
          <circle cx="887.500" cy="402.500" r="40.500"/><circle cx="1060" cy="379" r="40.500"/><circle cx="1201" cy="381" r="40.500"/><circle cx="1232" cy="516" r="40.500"/><circle cx="928.500" cy="588.500" r="40.500"/><circle cx="1065" cy="577" r="40.500"/>
          <circle cx="878.500" cy="328.500" r="16"/><circle cx="953.500" cy="289.500" r="16"/><circle cx="991.500" cy="307.500" r="16"/><circle cx="1104.500" cy="274.500" r="16"/><circle cx="1235.500" cy="267.500" r="16"/><circle cx="982.500" cy="438.500" r="16"/><circle cx="898.500" cy="472.500" r="16"/><circle cx="1001.500" cy="502.500" r="16"/><circle cx="1115.500" cy="468.500" r="16"/><circle cx="1158.500" cy="557.500" r="16"/><circle cx="1335.500" cy="459.500" r="16"/>
        </g>
        <path class="dots" d="M887 402.500h1M1060 378.500h1M1201 381.500h1M1231 516.500h1M928 588.500h1M1064 577.500h1M878 328.500h1M953 289.500h1M991 307.500h1M1104 274.500h1M1235 267.500h1M982 438.500h1M898 472.500h1M1001 502.500h1M1115 468.500h1M1158 557.500h1M1335 459.500h1"/>
        <g class="axes" fill="#3ff"><path d="M1085.500 457v20M1085 476.500h20" stroke="#3ff"/><text x="1082" y="452">Y</text><text x="1111" y="482">X</text></g>
      </g>
    </svg>
    <div class="tip">请选取基准圆弧</div>
    <div class="brand">三维网<b>www.3dportal.cn</b></div>
  </section>
</main>

<form class="dialog" role="dialog" aria-label="选取钻孔的点">
  <div class="title">
    <svg class="app" viewBox="0 0 20 20" aria-hidden="true"><path d="M.500.500h19v19H.500z" fill="#c0c4d0" stroke="#666"/><path d="M8 1h4v8l5-3q-3 4-7 12Q6 10 3 6l5 3z" fill="#000a90"/></svg>
    <h1>选取钻孔的点</h1>
    <button type="button" class="close" aria-label="关闭"><svg viewBox="0 0 18 16"><path d="M1 1h5l3 4 3-4h5l-5 7 5 7h-5l-3-4-3 4H1l5-7z" fill="#fff" stroke="#5c6270" stroke-width="1.300"/></svg></button>
  </div>
  <div class="client">
    <div class="stack">
      <button type="button" class="btn" aria-label="选点"><svg class="cur"><use href="#cur"/></svg></button>
      <button type="button" class="btn">自动</button>
      <button type="button" class="btn cool">选择图素<span class="lat">(S)</span></button>
      <button type="button" class="btn">窗选<span class="lat">(W)</span></button>
    </div>
    <div class="limit">
      <button type="button" class="btn active">限定圆弧</button>
      <div class="row"><label for="dia">直径<span class="lat">:</span></label><input id="dia" type="text" value="20.0" readonly></div>
      <div class="row"><label for="tol">公差<span class="lat">:</span></label><input id="tol" class="yellow" type="text" value="0.02"></div>
    </div>
    <div class="pairs">
      <button type="button" class="btn">副程序<span class="lat">...</span></button><button type="button" class="btn">选择上次</button>
      <button type="button" class="btn">排序<span class="lat">...</span></button><button type="button" class="btn">编辑<span class="lat">...</span></button>
      <button type="button" class="btn" disabled>撤消选择</button><button type="button" class="btn" disabled>全部撤消</button>
    </div>
    <div class="done">
      <button type="button" class="btn big" aria-label="确定"><svg><use href="#check"/></svg></button>
      <button type="button" class="btn big" aria-label="帮助"><svg><use href="#q"/></svg></button>
    </div>
  </div>
</form>

<svg class="callouts" aria-hidden="true">
  <rect x="47" y="299" width="209" height="46" fill="none" stroke="#f00" stroke-width="2"/>
  <path d="M263 318L463 238M630 240L857 319" stroke="#f00"/>
  <path d="M468 236l-11 0 3 8zM863 321l-8-7-3 8z" fill="#f00"/>
</svg>
</body>
</html>
```
FILE: styles.css
```css
* { box-sizing: border-box; }

body {
  margin: 0;
  min-height: 100vh;
  display: flex;
  flex-direction: column;
  position: relative;
  overflow: hidden;
  background: #d4d9ec;
  color: #000;
  font: 15px/18px "Noto Sans CJK SC", sans-serif;
}

button, input, select { font: inherit; color: inherit; margin: 0; padding: 0; }
.defs { position: absolute; width: 0; height: 0; }
.lat { font-family: "Liberation Mono", monospace; font-size: 13px; }

/* Top toolbars */
.bars { flex: none; }
.sliver { width: 1103px; height: 8px; background: #f0f0f0; border: solid #999; border-width: 0 1px 1px 0; }
.sliver svg { display: block; width: 100%; height: 7px; }

.iconbar { display: flex; width: max-content; height: 30px; background: #f0f0f0; border-bottom: 1px solid #999; }
.grp { display: flex; align-items: center; padding-right: 2px; border-right: 1px solid #a0a0a0; }
.grp.first { border-left: 1px solid #a0a0a0; }
.grip {
  flex: none; width: 3px; height: 18px; margin: 0 4px;
  background: repeating-linear-gradient(#bdbdbd 0 2px, transparent 2px 5px);
}
.tb { flex: none; width: 23px; height: 22px; border: 0; background: none; display: flex; align-items: center; justify-content: center; }
.roomy .tb { width: 24px; }
.tb svg { width: 16px; height: 16px; display: block; }
.dd { flex: none; width: 19px; height: 22px; border: 0; background: none; display: flex; align-items: center; justify-content: center; }
.dd::before { content: ""; border: 5px solid transparent; border-top-color: #000; border-bottom: 0; }
.vs { flex: none; width: 1px; height: 18px; margin: 0 6px 0 2px; background: #999; }

.coordbar {
  display: flex; align-items: center; width: max-content; height: 36px;
  padding: 0 2px 0 7px; background: #ffffcc; border: solid #999; border-width: 0 1px 1px 0;
}
.fld { display: flex; gap: 7px; margin-right: 16px; }
.fld.last { margin-right: 10px; }
.sq, .txt {
  height: 24px; width: 28px;
  border: 1px solid #9aa0a4; border-radius: 3px; background: #f2f2f2; box-shadow: 0 0 0 1px #f0f0f0;
}
.sq { display: flex; align-items: center; justify-content: center; }
.sq:disabled, .txt:disabled { border-color: #adb2b5; background: #f3f3f3; color: #888; }
.sq svg { flex: none; width: 20px; height: 20px; }
.sq.slim { width: 16px; }
.slim::before { content: ""; border: 3px solid transparent; border-top-color: #999; border-bottom: 0; }
.hot { border-color: #707070; background: linear-gradient(#f4f4f4 50%, #dcdcdc 50%, #cfcfcf); }
.combo { display: flex; align-items: center; width: 96px; height: 23px; padding: 0 2px; background: #fff; border: 1px solid #ababab; border-radius: 2px; }
.combo input { flex: 1; min-width: 0; height: 17px; border: 0; background: #f0f0f0; font: 13px/17px "Liberation Mono", monospace; }
.arrow { width: 18px; height: 20px; border: 0; background: #fff; display: flex; align-items: center; justify-content: center; }
.arrow::before { content: ""; border: 5px solid transparent; border-top-color: #707070; border-bottom: 0; }
.set { display: flex; gap: 4px; margin-right: 12px; }
.split { display: flex; gap: 2px; }
.rail { width: 1px; height: 35px; background: #909090; }
.hook { width: 4px; height: 28px; margin: 0 12px 0 2px; border: solid #909090; border-width: 0 1px 1px 0; }
.picks { display: flex; gap: 12px; margin-right: 5px; }
.txt { width: 62px; padding-bottom: 2px; text-align: center; white-space: nowrap; }
.picks select {
  appearance: none; width: 96px; height: 23px; padding: 0 0 1px 4px; border: 1px solid #adadad; border-radius: 2px;
  background-color: #f3f3f3;
  background-image: linear-gradient(to top right, transparent 50%, #707070 50%), linear-gradient(to top left, transparent 50%, #707070 50%);
  background-size: 5px 5px; background-position: 79px 8px, 84px 8px; background-repeat: no-repeat;
}
.marq { width: 46px; height: 26px; margin: -1px 0; border: 0; background: #f0f0f0; display: flex; align-items: center; gap: 13px; padding-left: 5px; }
.marq::before { content: ""; width: 15px; height: 15px; border: 1px dashed #888; }
.marq::after { content: ""; width: 5px; height: 1px; background: #aaa; }

.ribbon { height: 36px; padding-left: 362px; line-height: 36px; background: #f0f0f0; border-bottom: 1px solid #999; }

/* Work area */
.work { flex: 1; display: flex; min-height: 0; }
.manager { flex: none; width: 341px; padding-right: 4px; display: flex; flex-direction: column; background: #f0f0f0; border-right: 2px solid #a0a0a0; }
.mtop { display: flex; justify-content: flex-end; gap: 2px; height: 42px; padding-top: 1px; }
.mtop i { width: 4px; height: 18px; background: #b0b0b0; margin-right: -4px; }
.mclose { width: 19px; height: 20px; border: 1px solid #777; border-radius: 3px; background: #ececec; font-size: 12px; }
.mtab { height: 31px; border: solid #999; border-width: 1px 0; }
.mtool { height: 37px; }
.tree { flex: 1; margin-left: 3px; background: #fff; border: 1px solid #888; padding-top: 55px; text-align: right; }
.sel { height: 18px; background: #3399ff; color: #fff; }
.node { margin-top: 54px; white-space: nowrap; }

.solids { flex: none; width: 50px; border-right: 1px solid #999; padding-left: 1px; }
.vbar { background: #f0f0f0; border-bottom: 1px solid #999; padding: 4px 4px 3px; }
.hgrip { display: block; height: 3px; margin: 0 0 4px; background: repeating-linear-gradient(90deg, #bdbdbd 0 2px, transparent 2px 5px); }
.r { display: flex; align-items: center; height: 22px; }
.r .tb { width: 20px; }
.r .dd { width: 23px; }
.tick { width: 1px; height: 18px; margin-left: 4px; background: #999; }
.solids hr, .quick hr { height: 1px; margin: 3px 0 4px; border: 0; background: #999; }

.quick { flex: none; width: 32px; display: flex; flex-direction: column; border-right: 2px solid #888; background: #f0f0f0; overflow: hidden; }
.qtop { height: 236px; padding: 11px 4px 0 5px; border-right: 4px solid #d4d9ec; border-bottom: 1px solid #999; box-shadow: inset 0 -4px #d4d9ec; }
.qlist { padding: 5px 5px 0; }
.qlist .hgrip { margin-bottom: 3px; }

.view { flex: 1; min-width: 0; position: relative; overflow: hidden; background: #000; border-top: 1px solid #666; }
.drawing { position: absolute; inset: 0; width: 100%; height: 100%; }
.axes text { font: bold 16px/16px "Liberation Mono", monospace; }
.axes .mark { font: 16px/16px "Noto Sans CJK SC", sans-serif; }
.holes circle { fill: none; stroke: #33ffff; stroke-width: 3px; shape-rendering: crispEdges; }
.dots { stroke: #7ff; }
.tip { position: absolute; left: 53px; top: 106px; padding: 0 5px 2px; border: 1px solid #666; background: #ffffcc; font-size: 20px; line-height: 20px; white-space: nowrap; }
.brand {
  position: absolute; right: 19px; bottom: 5px; color: #fff; white-space: nowrap;
  font: bold 18px/20px "Noto Sans CJK SC", sans-serif;
  -webkit-text-stroke: 2px #f03030; paint-order: stroke fill;
}
.brand b { font: bold 15px/20px "DejaVu Sans", sans-serif; }

/* Dialog */
.dialog {
  position: absolute; left: -1px; top: 103px; width: 315px; padding: 0 7px 8px 0;
  border: 1px solid #666; border-radius: 0 8px 8px 0;
  background: linear-gradient(90deg, #f7e6da, #e4cbb8 50%, #fdeee0) 0 0 / 100% 36px no-repeat, linear-gradient(#fdeee0, #fdfdec 60%);
  box-shadow: 2px 2px 7px rgba(0, 0, 0, .55);
}
.title { display: flex; align-items: center; height: 34px; padding-left: 1px; }
.app { width: 20px; height: 20px; }
.title h1 { flex: 1; margin: 0; padding-left: 5px; font: 15px/18px "Noto Sans CJK SC", sans-serif; }
.close { align-self: flex-start; width: 59px; height: 24px; border: 1px solid #a09088; border-top: 0; border-radius: 0 0 5px 5px; background: rgba(255, 245, 235, .45); display: flex; align-items: center; justify-content: center; }
.close svg { width: 17px; height: 15px; }
.client { display: flex; flex-direction: column; padding: 14px 31px 13px 25px; border: 1px solid #777; background: #f0f0f0; }
.btn {
  width: 118px; height: 24px; padding-bottom: 3px; text-align: center; line-height: 18px;
  border: 1px solid #707070; border-radius: 3px; background: linear-gradient(#f2f2f2, #ebebeb 50%, #dddddd 50%, #cfcfcf);
  box-shadow: inset 0 0 0 1px #fafafa;
}
.btn svg { display: block; margin: 2px auto 0; }
.cool { background: linear-gradient(#f1f3f4, #e6eaed 50%, #d8dde0 50%, #ccd1d4); }
.btn:disabled { border-color: #adb8b5; background: #f4f4f4; color: #838383; }
.cur { width: 12px; height: 18px; }
.stack { display: grid; gap: 10px; justify-items: start; padding-left: 60px; }
.limit { margin: 13px 7px 0 3px; padding: 12px 29px 9px 28px; border: 1px solid #d5dfe5; border-radius: 4px; box-shadow: inset 0 0 0 1px #fff; }
.limit .btn { display: block; margin-left: 28px; }
.btn.active { border-color: #2c628b; background: linear-gradient(#e5f4fc, #c4e5f6 50%, #98d1ef 50%, #68b3db); box-shadow: inset 0 0 0 1px #8fc8e8; }
.row { display: flex; justify-content: space-between; align-items: center; margin-top: 8px; }
.active + .row { margin-top: 14px; }
.row input { width: 80px; height: 26px; padding: 0 3px 4px; border: 1px solid #b0b0b0; border-radius: 2px; background: #f0f0f0; font: 13px/18px "Liberation Mono", monospace; }
.row .yellow { border-color: #e0e4e8; background: #ffff80; box-shadow: inset 0 0 0 1px #fff; }
.pairs { display: grid; grid-template-columns: max-content max-content; gap: 8px; margin-top: 14px; }
.done { display: flex; justify-content: flex-end; gap: 8px; margin-top: 21px; }
.big { width: 70px; height: 32px; }
.big svg { width: 20px; height: 20px; }

.callouts { position: absolute; inset: 0; width: 100%; height: 100%; pointer-events: none; }
```
